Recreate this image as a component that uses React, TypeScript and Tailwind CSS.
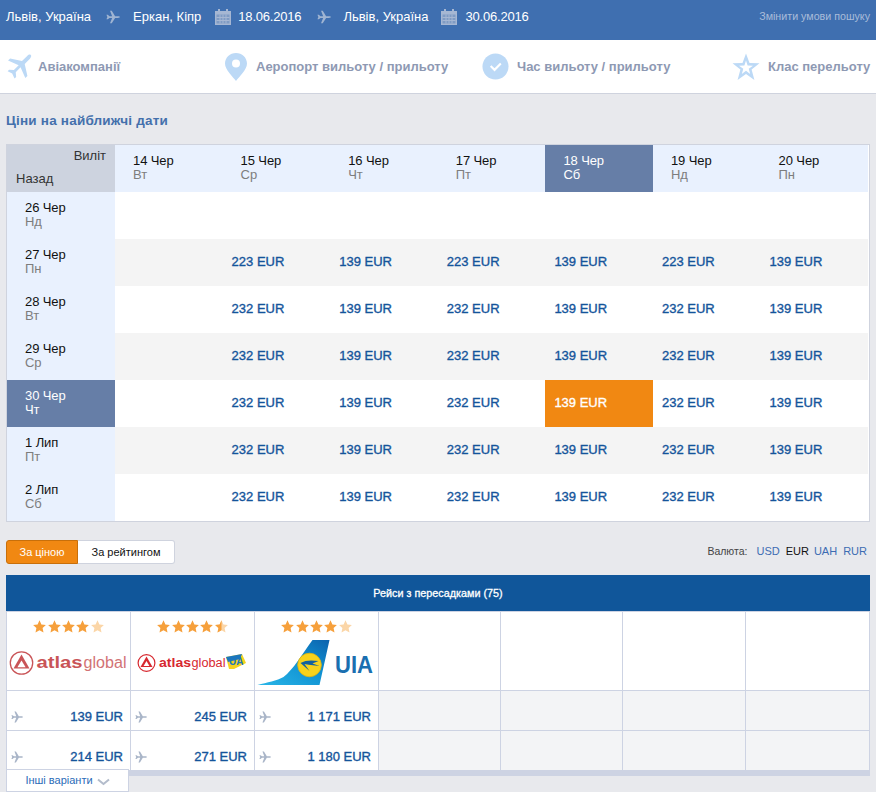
import React from "react";

const Plane = ({ className = "", color = "#9fb4d2", size = 14 }: { className?: string; color?: string; size?: number }) => (
  <svg width={size} height={size} viewBox="0 0 16 16" className={`shrink-0 ${className}`} fill={color}>
    <path d="M0.5 5.5 L2 5.5 L4 7 L7 7 L4.6 0.8 L6.6 0.8 L10.4 7 L13.6 7 C15 7 16 7.5 16 8 C16 8.5 15 9 13.6 9 L10.4 9 L6.6 15.2 L4.6 15.2 L7 9 L4 9 L2 10.5 L0.5 10.5 L1.6 8 Z" />
  </svg>
);

const Calendar = () => (
  <svg width="16" height="16" viewBox="0 0 16 16" className="shrink-0">
    <rect x="0" y="2" width="16" height="14" fill="#a6b7d3" />
    <rect x="3" y="0" width="2" height="4" fill="#a6b7d3" />
    <rect x="11" y="0" width="2" height="4" fill="#a6b7d3" />
    <rect x="1.5" y="5.5" width="13" height="9" fill="#7f9bc4" />
    <path d="M1.5 8.5H14.5M1.5 11.5H14.5M5 5.5V14.5M8 5.5V14.5M11 5.5V14.5" stroke="#a6b7d3" strokeWidth="1" />
  </svg>
);

const Star = ({ fill, half }: { fill: string; half?: boolean }) => {
  const d = "M6.5 0.3 L8.4 4.4 L12.9 4.9 L9.6 8 L10.5 12.5 L6.5 10.2 L2.5 12.5 L3.4 8 L0.1 4.9 L4.6 4.4 Z";
  return (
    <svg width="13" height="13" viewBox="0 0 13 13" className="shrink-0">
      <path d={d} fill={fill} />
      {half && <path d="M6.5 0.3 L4.6 4.4 L0.1 4.9 L3.4 8 L2.5 12.5 L6.5 10.2 Z" fill="#f6a03c" />}
    </svg>
  );
};

const Stars = ({ half }: { half?: boolean }) => (
  <div className="flex justify-center gap-[1.4px] h-[13px]">
    <Star fill="#f6a03c" />
    <Star fill="#f6a03c" />
    <Star fill="#f6a03c" />
    <Star fill="#f6a03c" />
    <Star fill="#fbd6a8" half={half} />
  </div>
);

const svgFont = "'Liberation Sans', sans-serif";

const AtlasLogo = () => (
  <svg width="122" height="30" viewBox="0 0 122 30" className="block">
    <circle cx="13.5" cy="15" r="11.2" fill="none" stroke="#c95457" strokeWidth="1.3" />
    <path d="M13.5 6.5 L21.5 20.5 L5.5 20.5 Z" fill="#c95457" />
    <path d="M13.5 12.5 L17.6 19.2 L9.4 19.2 Z" fill="#fff" />
    <text x="28.5" y="20" textLength="46" lengthAdjust="spacingAndGlyphs" fontFamily={svgFont} fontSize="16" fontWeight="700" fill="#c95457">atlas</text>
    <text x="75.5" y="20" textLength="43" lengthAdjust="spacingAndGlyphs" fontFamily={svgFont} fontSize="16" fill="#d27375">global</text>
  </svg>
);

const AtlasUaLogo = () => (
  <svg width="122" height="30" viewBox="0 0 122 30" className="block">
    <circle cx="14.5" cy="15" r="8.4" fill="none" stroke="#d7282f" strokeWidth="1.2" />
    <path d="M14.5 8.5 L20.5 19 L8.5 19 Z" fill="#d7282f" />
    <path d="M14.5 13 L17.4 18 L11.6 18 Z" fill="#fff" />
    <text x="27" y="19" textLength="32" lengthAdjust="spacingAndGlyphs" fontFamily={svgFont} fontSize="12.5" fontWeight="700" fill="#d7282f">atlas</text>
    <text x="59.5" y="19" textLength="34" lengthAdjust="spacingAndGlyphs" fontFamily={svgFont} fontSize="12.5" fill="#d7282f">global</text>
    <path d="M94 9 L110 6 L114 15 L102 21 L97 21 Z" fill="#f5d21f" />
    <path d="M94 9 L110 6 L108 11 L96 14 Z" fill="#1b76bd" />
    <text x="97" y="17" fontFamily={svgFont} fontSize="10" fontWeight="700" fill="#1b76bd">UA</text>
  </svg>
);

const UiaLogo = () => (
  <svg width="120" height="50" viewBox="0 0 120 50" className="block">
    <defs>
      <linearGradient id="tail" x1="0" y1="1" x2="1" y2="0">
        <stop offset="0" stopColor="#29b6e8" />
        <stop offset="0.6" stopColor="#0f8fd0" />
        <stop offset="1" stopColor="#0c62ad" />
      </linearGradient>
    </defs>
    <path d="M0.5 46 C10 43.5 20 41.5 26.5 38 C36 31 46 14 55.5 1 L72.5 1 L62.5 46 Z" fill="url(#tail)" />
    <circle cx="52.5" cy="26" r="11.8" fill="#f8d21c" stroke="#e3b50e" strokeWidth="0.8" />
    <path d="M43.5 24 C48.5 21 54.5 21 61.5 22 L55.5 24.5 L62.5 27 C56.5 26.5 50.5 25.5 47.5 25 L52.5 32 Z" fill="#14609f" />
    <text x="78" y="34" fontFamily={svgFont} fontSize="24" fontWeight="700" fill="#1a6fb0" textLength="38" lengthAdjust="spacingAndGlyphs">UIA</text>
  </svg>
);

const FilterItem = ({ icon, label, className = "" }: { icon: React.ReactNode; label: string; className?: string }) => (
  <div className={`flex items-center shrink-0 ${className}`}>
    {icon}
    <span className="text-[13px] font-bold text-[#8e99b3] whitespace-nowrap">{label}</span>
  </div>
);

const heads = [
  ["14 Чер", "Вт"],
  ["15 Чер", "Ср"],
  ["16 Чер", "Чт"],
  ["17 Чер", "Пт"],
  ["18 Чер", "Сб"],
  ["19 Чер", "Нд"],
  ["20 Чер", "Пн"],
];

const rows = [
  { d: "26 Чер", w: "Нд", p: null as null | string[] },
  { d: "27 Чер", w: "Пн", p: ["", "223", "139", "223", "139", "223", "139"] },
  { d: "28 Чер", w: "Вт", p: ["", "232", "139", "232", "139", "232", "139"] },
  { d: "29 Чер", w: "Ср", p: ["", "232", "139", "232", "139", "232", "139"] },
  { d: "30 Чер", w: "Чт", p: ["", "232", "139", "232", "139", "232", "139"], sel: true },
  { d: "1 Лип", w: "Пт", p: ["", "232", "139", "232", "139", "232", "139"] },
  { d: "2 Лип", w: "Сб", p: ["", "232", "139", "232", "139", "232", "139"] },
];

const DateCell = ({ d, w, active, className = "" }: { d: string; w: string; active?: boolean; className?: string }) => (
  <div className={`h-[47px] flex flex-col justify-center pl-[18px] pb-[2px] text-[13px] leading-[14px] tracking-[-0.1px] ${active ? "bg-[#667ea7] text-white" : "bg-[#e9f1fe] text-[#111]"} ${className}`}>
    <span>{d}</span>
    <span className={active ? "text-white" : "text-[#7d7d7d]"}>{w}</span>
  </div>
);

const cols = "grid grid-cols-[124px_124px_124px_122px_122px_123px_124px]";

const PriceCell = ({ price }: { price?: string }) =>
  price ? (
    <div className="h-[40px] border-r border-b border-[#cdd3e3] bg-white flex items-center justify-between pl-[4px] pr-[7px] pt-[12px]">
      <Plane size={12} color="#a9b5c8" />
      <span className="text-[13px] text-[#14549b] [-webkit-text-stroke:0.35px_#14549b]">{price} EUR</span>
    </div>
  ) : (
    <div className="h-[40px] border-r border-b border-[#cdd3e3] bg-[#f3f4f6]" />
  );

export default function App() {
  return (
    <div className="w-[876px] h-[792px] overflow-hidden bg-[#e8e9ed] font-['Liberation_Sans',Arial,sans-serif]">
      <header className="h-[40px] bg-[#3f6fb0] flex items-center pl-[6px] pr-[6px] pb-[7px] text-white text-[13px]">
        <span>Львів, Україна</span>
        <Plane className="ml-[15px]" />
        <span className="ml-[13px]">Еркан, Кіпр</span>
        <span className="ml-[14px]"><Calendar /></span>
        <span className="ml-[7px] tracking-[-0.2px]">18.06.2016</span>
        <Plane className="ml-[16px]" />
        <span className="ml-[12px]">Львів, Україна</span>
        <span className="ml-[13px]"><Calendar /></span>
        <span className="ml-[8px] tracking-[-0.2px]">30.06.2016</span>
        <span className="ml-auto text-[10.7px] text-[#a9bcd9]">Змінити умови пошуку</span>
      </header>

      <nav className="h-[54px] bg-white border-b border-[#cfd3de] flex items-center pl-[7px]">
        <FilterItem
          label="Авіакомпанії"
          className="w-[218px] gap-[6px]"
          icon={
            <svg width="25" height="25" viewBox="0 0 24 24" fill="#bcd9f6">
              <path d="M22.6 0.8 C23.8 1.6 23.2 3.2 22 4.6 L17 9.6 L19.6 21 L17.6 23 L13 12.8 L8.4 17.4 L8.8 22 L7.2 23.4 L5 18.8 L0.6 16.6 L2 15 L6.6 15.4 L11.2 10.8 L1 6.2 L3 4.2 L14.4 6.8 L19.4 1.8 C20.6 0.8 21.8 0.2 22.6 0.8 Z" />
            </svg>
          }
        />
        <FilterItem
          label="Аеропорт вильоту / прильоту"
          className="w-[257px] gap-[9px]"
          icon={
            <svg width="22" height="28" viewBox="0 0 22 28">
              <path d="M11 0 C17 0 22 4.6 22 10.6 C22 17 14 24 11 28 C8 24 0 17 0 10.6 C0 4.6 5 0 11 0 Z" fill="#bcd9f6" />
              <circle cx="11" cy="10.5" r="4" fill="#fff" />
            </svg>
          }
        />
        <FilterItem
          label="Час вильоту / прильоту"
          className="w-[250px] gap-[8px]"
          icon={
            <svg width="27" height="27" viewBox="0 0 28 28">
              <circle cx="14" cy="14" r="13.5" fill="#bcd9f6" />
              <path d="M9 13.5 L13 17.5 L19.5 11" fill="none" stroke="#fff" strokeWidth="2.2" />
            </svg>
          }
        />
        <FilterItem
          label="Клас перельоту"
          className="gap-[8px]"
          icon={
            <svg width="28" height="28" viewBox="0 0 28 28">
              <path d="M14 0.5 L17.5 10 L27.5 10.3 L19.6 16.6 L22.4 27 L14 21 L5.6 27 L8.4 16.6 L0.5 10.3 L10.5 10 Z" fill="#bcd9f6" />
              <path d="M14 7.5 L15.6 12.6 L21 12.7 L16.7 15.8 L18.2 21 L14 17.8 L9.8 21 L11.3 15.8 L7 12.7 L12.4 12.6 Z" fill="#fff" />
            </svg>
          }
        />
      </nav>

      <main className="px-[6px]">
        <h2 className="h-[50px] pt-[19px] text-[13.5px] leading-[16px] font-bold text-[#4470ac] tracking-[0.2px]">Ціни на найближчі дати</h2>

        <section className="border border-[#cfd3de] bg-white w-[864px]">
          <div className="grid grid-cols-[108px_repeat(7,107.6px)]">
            <div className="h-[47px] bg-[#cdd3df] text-[13px] text-[#333]">
              <div className="text-right pr-[9px] pt-[3px] leading-[15px]">Виліт</div>
              <div className="pl-[9px] pt-[8px] leading-[15px]">Назад</div>
            </div>
            {heads.map(([d, w], i) => (
              <DateCell key={d} d={d} w={w} active={i === 4} />
            ))}
            {rows.map((r, ri) => (
              <React.Fragment key={r.d}>
                <DateCell d={r.d} w={r.w} active={r.sel} />
                {Array.from({ length: 7 }).map((_, ci) => {
                  const v = r.p ? r.p[ci] : "";
                  const sel = r.sel && ci === 4;
                  return (
                    <div
                      key={ci}
                      className={`h-[47px] flex items-center pl-[9px] pb-[2px] text-[13px] ${sel ? "bg-[#f18812] text-white [-webkit-text-stroke:0.35px_#fff]" : ri % 2 === 1 ? "bg-[#f4f4f4] text-[#14549b] [-webkit-text-stroke:0.35px_#14549b]" : "bg-white text-[#14549b] [-webkit-text-stroke:0.35px_#14549b]"}`}
                    >
                      {v ? `${v} EUR` : ""}
                    </div>
                  );
                })}
              </React.Fragment>
            ))}
          </div>
        </section>

        <div className="h-[53px] flex items-center justify-between pt-[7px]">
          <div className="flex h-[24px] text-[11px]">
            <div className="w-[72px] bg-[#f18812] border border-[#c86f0a] rounded-l-[3px] text-white flex items-center justify-center">За ціною</div>
            <div className="w-[97px] bg-white border border-[#cfd3de] border-l-0 rounded-r-[3px] text-[#111] flex items-center justify-center">За рейтингом</div>
          </div>
          <div className="flex items-center text-[11px] pr-[3px] pb-[1px]">
            <span className="text-[#444] text-[10.5px]">Валюта:</span>
            <span className="ml-[9px] text-[#3d6cb3]">USD</span>
            <span className="ml-[6px] text-[#111]">EUR</span>
            <span className="ml-[5px] text-[#3d6cb3]">UAH</span>
            <span className="ml-[6px] text-[#3d6cb3]">RUR</span>
          </div>
        </div>

        <section className="w-[864px] relative">
          <div className="h-[36px] bg-[#10569a] text-white text-[10.8px] [-webkit-text-stroke:0.3px_#fff] flex items-center justify-center">Рейси з пересадками (75)</div>
          <div className={`${cols} border-t border-l border-[#cdd3e3]`}>
            {[
              <AtlasLogo key="a" />,
              <AtlasUaLogo key="b" />,
              <UiaLogo key="c" />,
            ].map((logo, i) => (
              <div key={i} className="h-[79px] bg-white border-r border-b border-[#cdd3e3] pt-[8px]">
                <Stars half={i === 1} />
                <div className={`flex justify-center ${i === 2 ? "mt-[6px]" : "mt-[15px]"}`}>{logo}</div>
              </div>
            ))}
            {[0, 1, 2, 3].map((i) => (
              <div key={i} className="h-[79px] bg-white border-r border-b border-[#cdd3e3]" />
            ))}
            {["139", "245", "1 171", "", "", "", ""].map((p, i) => (
              <PriceCell key={i} price={p} />
            ))}
            {["214", "271", "1 180", "", "", "", ""].map((p, i) => (
              <PriceCell key={i} price={p} />
            ))}
          </div>
          <div className="h-[5px] bg-[#cdd3e3]" />
          <div className="absolute left-0 top-[194px] w-[123px] h-[23px] bg-white border border-[#cdd3e3] flex items-center justify-center gap-[4px] text-[11px] text-[#2b6cb8]">
            <span>Інші варіанти</span>
            <svg width="13" height="8" viewBox="0 0 13 8" className="mt-[2px]">
              <path d="M1 1.5 L6.5 6 L12 1.5" fill="none" stroke="#b3bccb" strokeWidth="2" />
            </svg>
          </div>
        </section>
      </main>
    </div>
  );
}
